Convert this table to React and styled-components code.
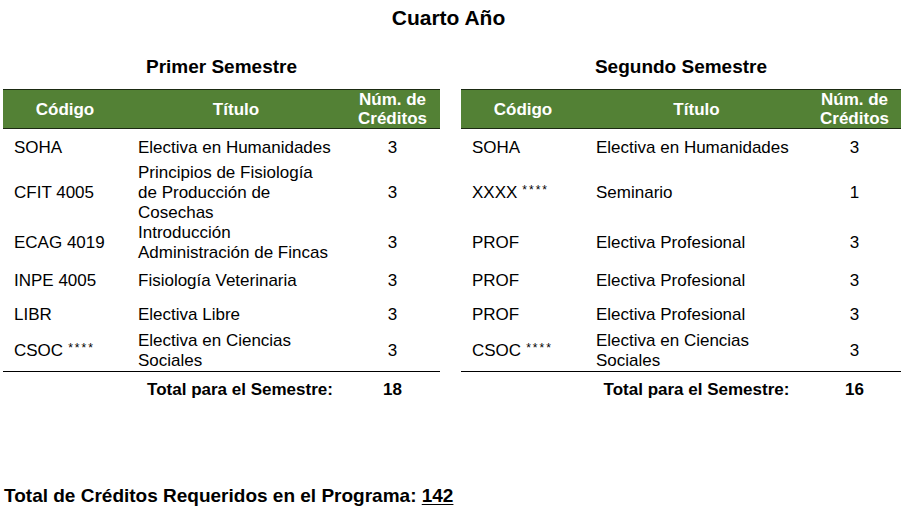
import React from "react";
import styled, { createGlobalStyle } from "styled-components";

const Global = createGlobalStyle`
  html, body { margin: 0; padding: 0; background: #fff; }
  body { font-family: "Liberation Sans", Arial, sans-serif; color: #000; }
`;

const Page = styled.div`
  width: 907px;
  height: 516px;
  overflow: hidden;
  display: flex;
  flex-direction: column;
`;

const YearTitle = styled.h1`
  margin: 0;
  font-size: 21px;
  font-weight: 700;
  line-height: 36px;
  text-align: center;
  padding-right: 10px;
`;

const Semesters = styled.div`
  display: grid;
  grid-template-columns: 437px 440px;
  column-gap: 21px;
  padding-left: 3px;
`;

const Semester = styled.section`
  display: flex;
  flex-direction: column;
`;

const SemesterTitle = styled.h2`
  margin: 0;
  padding: 20px 0 11px;
  font-size: 19px;
  line-height: 22px;
  font-weight: 700;
  text-align: center;
`;

const Table = styled.table`
  width: 100%;
  border-collapse: collapse;
  table-layout: fixed;
  font-size: 17px;
`;

const HeadRow = styled.tr`
  background: #538135;
  border-top: 1px solid #1b2a12;
  border-bottom: 1px solid #1b2a12;
`;

const Th = styled.th`
  color: #fff;
  font-weight: 700;
  font-size: 17px;
  line-height: 19px;
  height: 38px;
  padding: 0;
  text-align: center;
  vertical-align: middle;
`;

const Td = styled.td`
  height: ${(p) => p.$h - p.$pt}px;
  padding: ${(p) => p.$pt}px ${(p) => (p.$center ? 0 : 12)}px 0
    ${(p) => (p.$center ? 0 : 11)}px;
  line-height: 20px;
  vertical-align: middle;
  text-align: ${(p) => (p.$center ? "center" : "left")};
`;

const Stars = styled.span`
  font-size: 12px;
  letter-spacing: 2px;
  margin-left: 5px;
  vertical-align: 4px;
  line-height: 0;
`;

const TotalRow = styled.tr`
  border-top: 1px solid #000;
`;

const TotalLabel = styled.td`
  height: 35px;
  padding: 0 0 0 ${(p) => p.$shift}px;
  font-weight: 700;
  text-align: center;
  vertical-align: middle;
`;

const TotalValue = styled.td`
  padding: 0;
  font-weight: 700;
  text-align: center;
  vertical-align: middle;
`;

const ProgramTotal = styled.p`
  margin: 0;
  padding: 78px 0 0 4px;
  font-size: 19px;
  font-weight: 700;
  line-height: 22px;
`;

const Underlined = styled.span`
  text-decoration: underline;
  text-underline-offset: 2px;
`;

const heights = [34, 60, 40, 34, 34, 40];
const pads = [4, 0, 0, 2, 2, 0];

const first = {
  title: "Primer Semestre",
  cols: [124, 218, 95],
  total: 18,
  shift: 8,
  rows: [
    ["SOHA", "", "Electiva en Humanidades", 3],
    ["CFIT 4005", "", "Principios de Fisiología de Producción de Cosechas", 3],
    ["ECAG 4019", "", "Introducción Administración de Fincas", 3],
    ["INPE 4005", "", "Fisiología Veterinaria", 3],
    ["LIBR", "", "Electiva Libre", 3],
    ["CSOC", "****", "Electiva en Ciencias Sociales", 3],
  ],
};

const second = {
  title: "Segundo Semestre",
  cols: [124, 223, 93],
  total: 16,
  shift: 0,
  rows: [
    ["SOHA", "", "Electiva en Humanidades", 3],
    ["XXXX", "****", "Seminario", 1],
    ["PROF", "", "Electiva Profesional", 3],
    ["PROF", "", "Electiva Profesional", 3],
    ["PROF", "", "Electiva Profesional", 3],
    ["CSOC", "****", "Electiva en Ciencias Sociales", 3],
  ],
};

function SemesterTable({ data }) {
  return (
    <Semester>
      <SemesterTitle>{data.title}</SemesterTitle>
      <Table>
        <colgroup>
          {data.cols.map((w, i) => (
            <col key={i} style={{ width: w }} />
          ))}
        </colgroup>
        <thead>
          <HeadRow>
            <Th>Código</Th>
            <Th>Título</Th>
            <Th>
              Núm. de
              <br />
              Créditos
            </Th>
          </HeadRow>
        </thead>
        <tbody>
          {data.rows.map(([code, stars, title, cr], i) => {
            const pt = pads[i];
            return (
              <tr key={i}>
                <Td $h={heights[i]} $pt={pt}>
                  {code}
                  {stars && <Stars>{stars}</Stars>}
                </Td>
                <Td $h={heights[i]} $pt={pt}>
                  {title}
                </Td>
                <Td $h={heights[i]} $pt={pt} $center>
                  {cr}
                </Td>
              </tr>
            );
          })}
          <TotalRow>
            <td />
            <TotalLabel $shift={data.shift}>Total para el Semestre:</TotalLabel>
            <TotalValue>{data.total}</TotalValue>
          </TotalRow>
        </tbody>
      </Table>
    </Semester>
  );
}

export default function App() {
  return (
    <Page>
      <Global />
      <YearTitle>Cuarto Año</YearTitle>
      <Semesters>
        <SemesterTable data={first} />
        <SemesterTable data={second} />
      </Semesters>
      <ProgramTotal>
        Total de Créditos Requeridos en el Programa: <Underlined>142</Underlined>
      </ProgramTotal>
    </Page>
  );
}
